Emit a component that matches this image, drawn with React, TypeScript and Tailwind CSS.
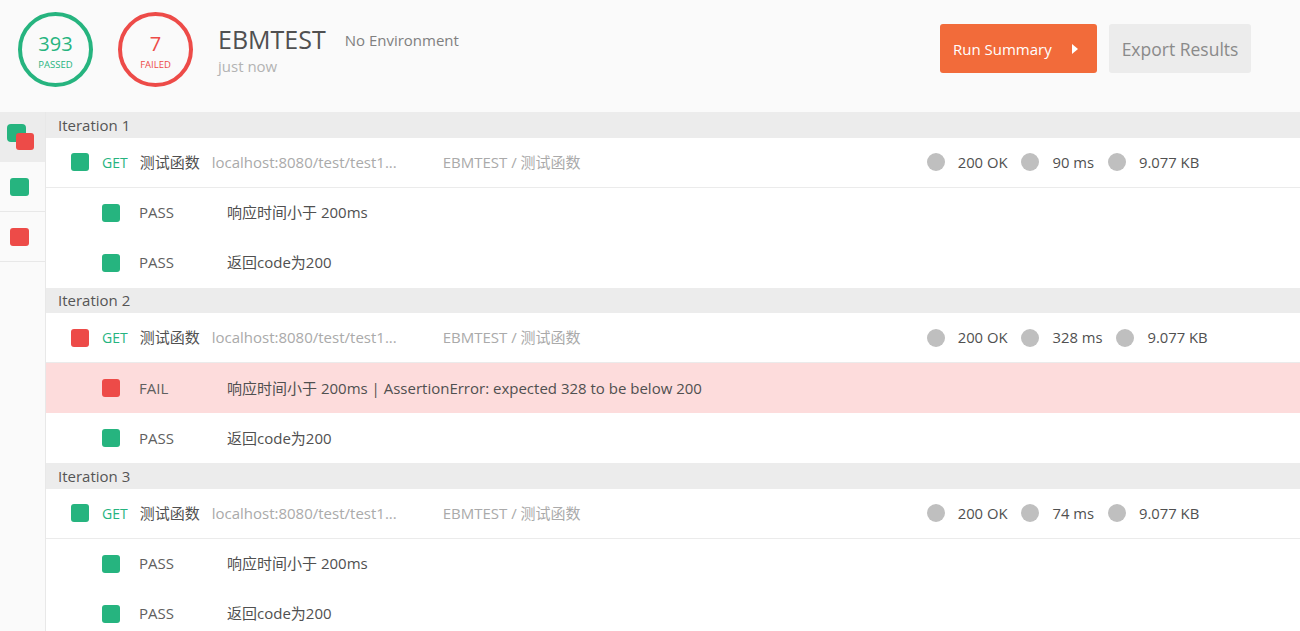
import React from "react";

const GREEN = "bg-[#26b47f]";
const RED = "bg-[#ed4b48]";

type Test = { pass: boolean; text: string };
type Iter = { n: number; pass: boolean; time: string; tests: Test[] };

const iterations: Iter[] = [
  {
    n: 1,
    pass: true,
    time: "90 ms",
    tests: [
      { pass: true, text: "响应时间小于 200ms" },
      { pass: true, text: "返回code为200" },
    ],
  },
  {
    n: 2,
    pass: false,
    time: "328 ms",
    tests: [
      { pass: false, text: "响应时间小于 200ms | AssertionError: expected 328 to be below 200" },
      { pass: true, text: "返回code为200" },
    ],
  },
  {
    n: 3,
    pass: true,
    time: "74 ms",
    tests: [
      { pass: true, text: "响应时间小于 200ms" },
      { pass: true, text: "返回code为200" },
    ],
  },
];

function Square({ pass }: { pass: boolean }) {
  return <div className={`w-[18px] h-[18px] rounded-[3px] flex-none ${pass ? GREEN : RED}`} />;
}

function Stat({ text }: { text: string }) {
  return (
    <div className="flex items-center mr-[14px]">
      <div className="w-[18px] h-[18px] rounded-full bg-[#bfbfbf] flex-none" />
      <span className="ml-[13px] text-[14.8px] text-[#505050]">{text}</span>
    </div>
  );
}

export default function App() {
  return (
    <div
      className="h-[631px] w-[1300px] overflow-hidden flex flex-col bg-white text-[15px]"
      style={{ fontFamily: '"Open Sans", "Noto Sans CJK SC", sans-serif' }}
    >
      {/* Header */}
      <div className="h-[112px] flex-none bg-[#fafafa] flex items-start pl-[18px] pr-[49px] pt-[12px]">
        <div className="w-[75px] h-[75px] rounded-full border-4 border-[#26b47f] flex flex-col items-center justify-center pt-[3px] text-[#26b47f]">
          <div className="text-[20px] leading-[24px]">393</div>
          <div className="text-[9.5px] leading-[12px] mt-[3px]">PASSED</div>
        </div>
        <div className="ml-[25px] w-[75px] h-[75px] rounded-full border-4 border-[#ed4b48] flex flex-col items-center justify-center pt-[3px] text-[#ed4b48]">
          <div className="text-[20px] leading-[24px]">7</div>
          <div className="text-[9.5px] leading-[12px] mt-[3px]">FAILED</div>
        </div>
        <div className="ml-[25px] mt-[12px] flex flex-col">
          <div className="flex items-start">
            <span className="text-[25px] leading-[30px] text-[#505050]">EBMTEST</span>
            <span className="ml-[19px] mt-[6px] text-[15px] leading-[20px] text-[#808080]">No Environment</span>
          </div>
          <div className="mt-[2px] text-[15px] leading-[20px] text-[#b3b3b3]">just now</div>
        </div>
        <div className="flex-1" />
        <div className="flex mt-[12px] gap-[12px]">
          <div className="h-[49px] w-[157px] rounded-[3px] bg-[#f26b3a] text-white flex items-center pl-[13px] pt-[2px]">
            <span className="text-[15px]">Run Summary</span>
            <svg className="ml-[20px] -mt-[1px]" width="7" height="10" viewBox="0 0 7 10">
              <path d="M0 0 L6 5 L0 10 Z" fill="#ffffff" />
            </svg>
          </div>
          <div className="h-[49px] w-[142px] rounded-[3px] bg-[#ececec] text-[#8a8a8a] flex items-center justify-center pt-[2px]">
            <span className="text-[17.5px]">Export Results</span>
          </div>
        </div>
      </div>

      {/* Body */}
      <div className="flex flex-1 min-h-0">
        {/* Sidebar */}
        <div className="w-[46px] flex-none bg-[#fafafa] border-r border-[#e8e8e8] flex flex-col">
          <div className="h-[50px] bg-[#ececec] border-b border-[#ececec] relative">
            <div className="absolute left-[7px] top-[12px] w-[19px] h-[18px] rounded-[4px] bg-[#26b47f]" />
            <div className="absolute left-[16px] top-[21px] w-[18px] h-[17px] rounded-[3px] bg-[#ed4b48]" />
          </div>
          <div className="h-[50px] border-b border-[#e8e8e8] flex items-center pl-[10px]">
            <div className="w-[19px] h-[18px] rounded-[3px] bg-[#26b47f]" />
          </div>
          <div className="h-[50px] border-b border-[#e8e8e8] flex items-center pl-[10px]">
            <div className="w-[19px] h-[18px] rounded-[3px] bg-[#ed4b48]" />
          </div>
        </div>

        {/* Main */}
        <div className="flex-1 flex flex-col">
          {iterations.map((it) => (
            <div key={it.n} className="flex flex-col">
              <div className="h-[25.5px] bg-[#ececec] flex items-center pl-[12px] pt-[1px] text-[#555555] leading-none">
                Iteration {it.n}
              </div>
              <div className="h-[50px] border-b border-[#ebebeb] flex items-center pl-[25px]">
                <Square pass={it.pass} />
                <span className="ml-[13px] text-[14px] text-[#26b47f]">GET</span>
                <span className="ml-[12px] text-[#505050]">测试函数</span>
                <span className="ml-[12px] w-[231px] text-[#aaaaaa] whitespace-nowrap">localhost:8080/test/test1...</span>
                <span className="w-[484px] text-[#aaaaaa] whitespace-nowrap">EBMTEST / 测试函数</span>
                <Stat text="200 OK" />
                <Stat text={it.time} />
                <Stat text="9.077 KB" />
              </div>
              {it.tests.map((t, i) => (
                <div
                  key={i}
                  className={`h-[50px] flex items-center pl-[56px] ${t.pass ? "" : "bg-[#fddcdc]"}`}
                >
                  <Square pass={t.pass} />
                  <span className="ml-[19px] w-[88px] text-[#606060]">{t.pass ? "PASS" : "FAIL"}</span>
                  <span className="text-[#505050] whitespace-nowrap">{t.text}</span>
                </div>
              ))}
            </div>
          ))}
        </div>
      </div>
    </div>
  );
}
